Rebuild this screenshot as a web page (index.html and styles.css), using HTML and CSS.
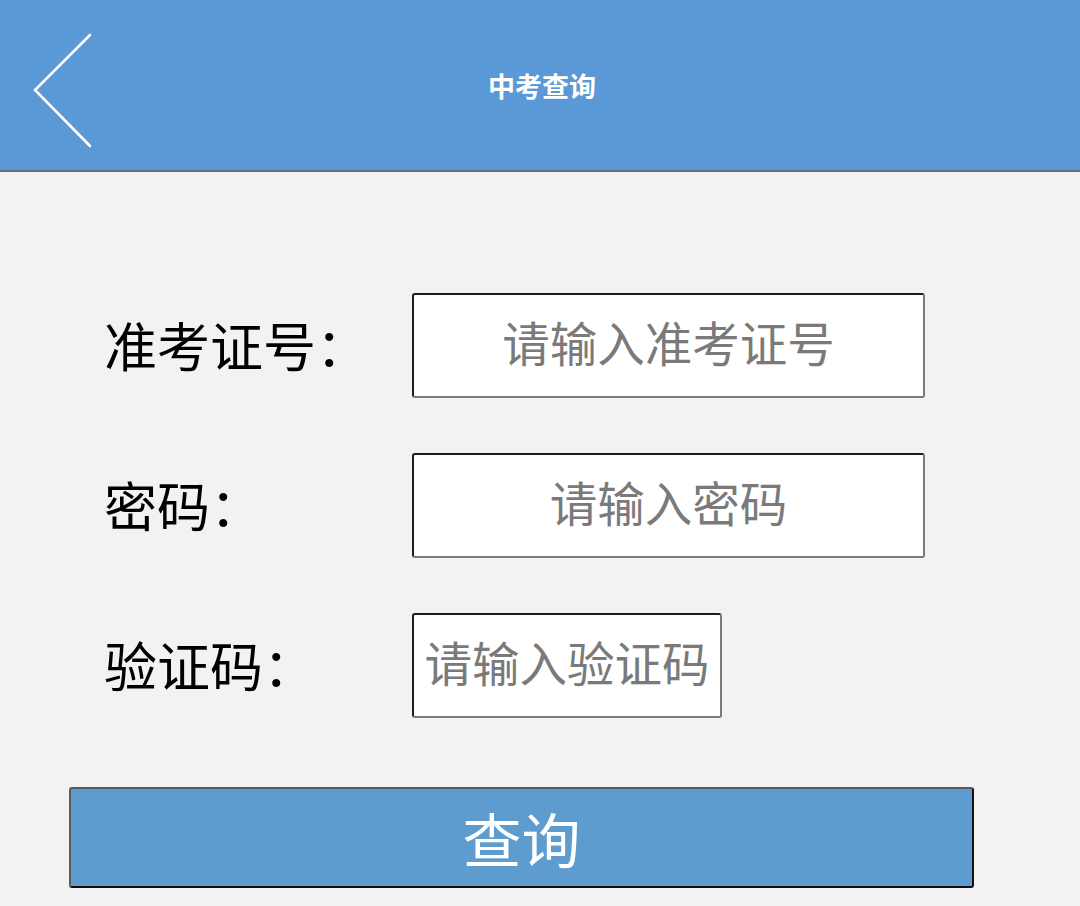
FILE: index.html
```html
<!DOCTYPE html>
<html lang="zh-CN">
<head>
<meta charset="utf-8">
<title>中考查询</title>
<link rel="stylesheet" href="styles.css">
</head>
<body>
<header class="topbar">
  <div class="back">
    <svg class="back-icon" width="62" height="116" viewBox="0 0 62 116">
      <path d="M58 2 L3 57 L58 113" fill="none" stroke="#ffffff" stroke-width="2.6" stroke-linecap="round" stroke-linejoin="miter"/>
    </svg>
  </div>
  <h1 class="title">中考查询</h1>
  <div class="spacer"></div>
</header>
<main class="content">
  <form class="form">
    <label class="label" for="zkzh">准考证号：</label>
    <input class="field field-wide" id="zkzh" type="text" placeholder="请输入准考证号">
    <label class="label" for="mm">密码：</label>
    <input class="field field-wide" id="mm" type="text" placeholder="请输入密码">
    <label class="label" for="yzm">验证码：</label>
    <input class="field field-short" id="yzm" type="text" placeholder="请输入验证码">
  </form>
  <button class="submit" type="button">查询</button>
</main>
</body>
</html>
```
FILE: styles.css
```css
html, body {
  margin: 0;
  padding: 0;
}
body {
  background: #f2f2f2;
  font-family: "Noto Sans CJK SC", "Noto Sans", sans-serif;
  width: 1080px;
  height: 906px;
  overflow: hidden;
}
.topbar {
  height: 170px;
  background: #5b98d6;
  border-bottom: 2px solid #6a6e73;
  display: grid;
  grid-template-columns: 1fr auto 1fr;
  align-items: center;
}
.back {
  padding-left: 32px;
  display: flex;
  align-items: center;
  margin-top: 11px;
}
.back-icon {
  display: block;
}
.title {
  margin: 0;
  color: #ffffff;
  font-size: 27px;
  font-weight: 700;
  line-height: 1;
  padding-left: 4px;
}
.content {
  padding-top: 121px;
}
.form {
  display: grid;
  grid-template-columns: 308px auto;
  row-gap: 55px;
  padding-left: 104px;
  align-items: center;
}
.label {
  font-size: 53px;
  color: #000000;
  line-height: 1;
  padding-bottom: 2px;
}
.field {
  box-sizing: border-box;
  height: 105px;
  margin: 0;
  padding: 0 0 8px 0;
  background: #ffffff;
  border: 2px solid;
  border-color: #1e1e1e #7a7a7a #7a7a7a #1e1e1e;
  border-radius: 3px;
  font-family: "Noto Sans CJK SC", "Noto Sans", sans-serif;
  font-size: 47.5px;
  color: #777777;
  text-align: center;
  outline: none;
}
.field::placeholder {
  color: #7a7a7a;
  opacity: 1;
}
.field-wide {
  width: 513px;
}
.field-short {
  width: 310px;
}
.submit {
  display: block;
  box-sizing: border-box;
  margin: 69px 0 0 69px;
  width: 905px;
  height: 101px;
  padding: 0;
  background: #5e9cd0;
  border: 2px solid;
  border-color: #555a60 #111111 #111111 #555a60;
  border-radius: 3px;
  color: #ffffff;
  font-family: "Noto Sans CJK SC", "Noto Sans", sans-serif;
  font-size: 59px;
  line-height: 1;
}
```
